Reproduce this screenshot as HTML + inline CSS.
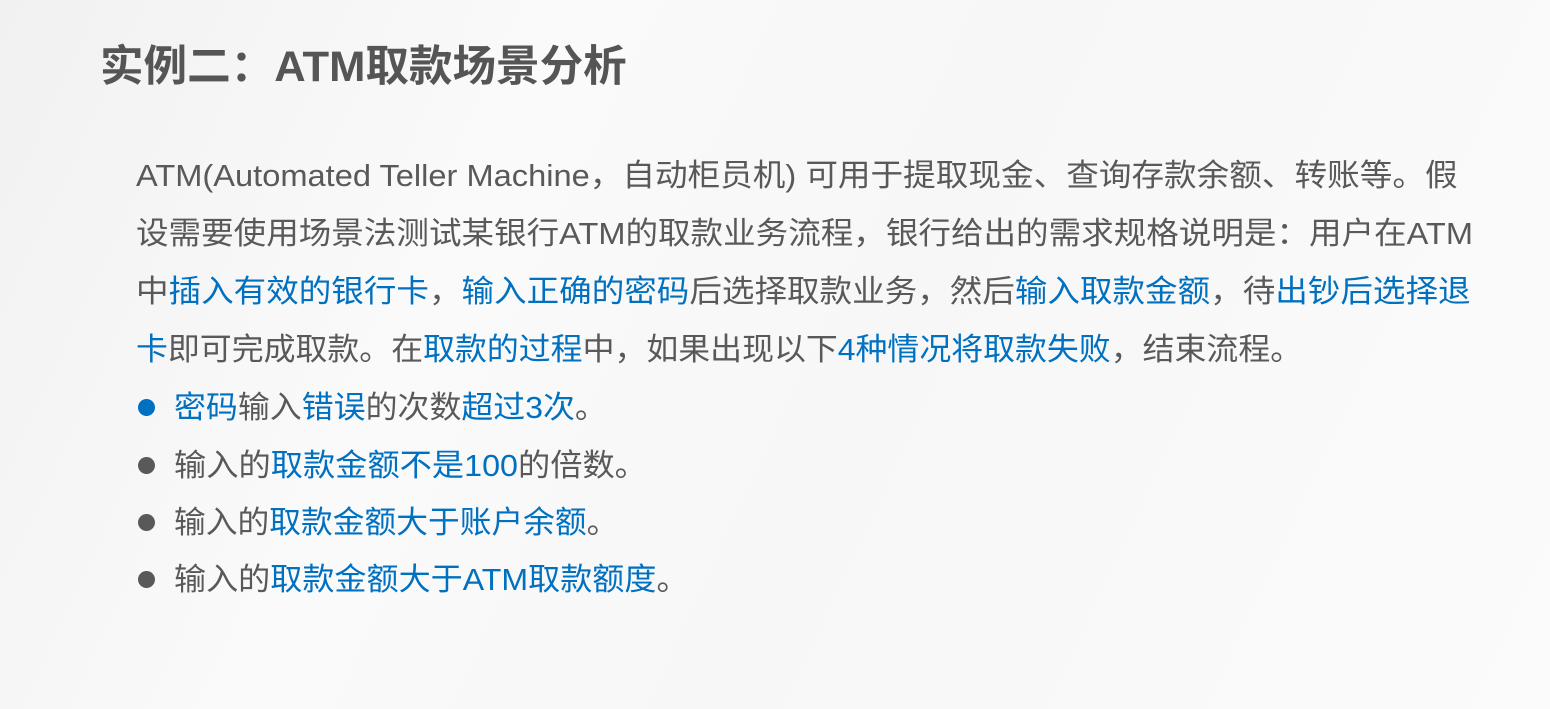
<!DOCTYPE html>
<html><head><meta charset="utf-8"><style>
html,body{margin:0;padding:0}
body{width:1550px;height:709px;overflow:hidden;position:relative;
background:linear-gradient(115deg,#f1f1f1 0%,#fafafa 30%,#f7f7f7 55%,#fbfbfb 100%);
font-family:"Liberation Sans","Noto Sans CJK SC",sans-serif;color:#595959}
.t{position:absolute;left:100px;top:39px;font-size:43px;font-weight:bold;color:#555;white-space:nowrap;line-height:56px;transform:scaleX(1.013);transform-origin:0 0}
.l{position:absolute;left:136px;font-size:31px;white-space:nowrap;line-height:40px;transform-origin:0 0}
.b{color:#0070c0}
.dot{position:absolute;left:138px;width:17px;height:17px;border-radius:50%;background:#595959}
</style></head><body>
<div class="t">实例二：ATM取款场景分析</div>
<div class="l" style="top:156px;transform:scaleX(1.052)">ATM(Automated Teller Machine，自动柜员机) 可用于提取现金、查询存款余额、转账等。假</div>
<div class="l" style="top:214px;transform:scaleX(1.05)">设需要使用场景法测试某银行ATM的取款业务流程，银行给出的需求规格说明是：用户在ATM</div>
<div class="l" style="top:272px;transform:scaleX(1.05)">中<span class="b">插入有效的银行卡</span>，<span class="b">输入正确的密码</span>后选择取款业务，然后<span class="b">输入取款金额</span>，待<span class="b">出钞后选择退</span></div>
<div class="l" style="top:330px;transform:scaleX(1.029)"><span class="b">卡</span>即可完成取款。在<span class="b">取款的过程</span>中，如果出现以下<span class="b">4种情况将取款失败</span>，结束流程。</div>
<div class="dot" style="top:399px;background:#0070c0"></div>
<div class="l" style="left:174px;top:388px;transform:scaleX(1.03)"><span class="b">密码</span>输入<span class="b">错误</span>的次数<span class="b">超过3次</span>。</div>
<div class="dot" style="top:457px"></div>
<div class="l" style="left:174px;top:446px;transform:scaleX(1.04)">输入的<span class="b">取款金额不是100</span>的倍数。</div>
<div class="dot" style="top:514px"></div>
<div class="l" style="left:174px;top:503px;transform:scaleX(1.024)">输入的<span class="b">取款金额大于账户余额</span>。</div>
<div class="dot" style="top:571px"></div>
<div class="l" style="left:174px;top:560px;transform:scaleX(1.035)">输入的<span class="b">取款金额大于ATM取款额度</span>。</div>
</body></html>
